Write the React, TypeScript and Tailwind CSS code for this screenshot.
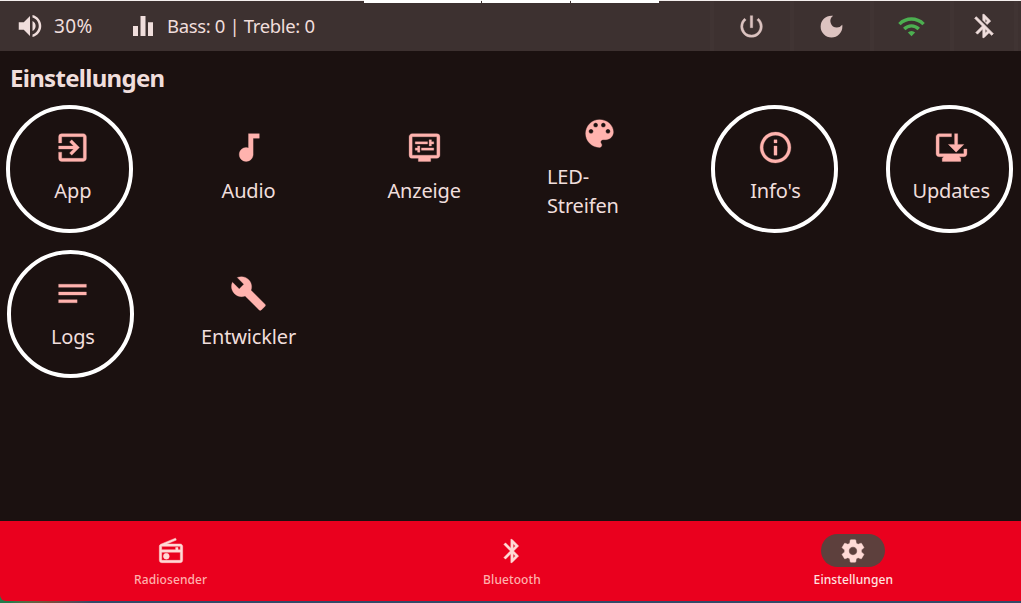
import type { IconType } from "react-icons";
import {
  MdAudiotrack,
  MdBluetooth,
  MdBluetoothDisabled,
  MdBrowserUpdated,
  MdBuild,
  MdDarkMode,
  MdDisplaySettings,
  MdEqualizer,
  MdExitToApp,
  MdInfoOutline,
  MdNotes,
  MdOutlineRadio,
  MdPowerSettingsNew,
  MdSettings,
  MdVolumeUp,
  MdWifi,
} from "react-icons/md";

type Tile = { label: string; icon: IconType; ring?: string };

// Palette glyph drawn on an 18-unit body inside the 24-unit grid.
const PaletteIcon: IconType = ({ size, className }) => (
  <svg width={size} height={size} viewBox="0 0 24 24" fill="currentColor" className={className}>
    <path d="M12 3c-4.97 0-9 4.03-9 9s4.03 9 9 9c.83 0 1.5-.67 1.5-1.5 0-.39-.15-.74-.39-1.01-.23-.26-.38-.61-.38-.99 0-.83.67-1.5 1.5-1.5H16c2.76 0 5-2.24 5-5 0-4.42-4.03-8-9-8zm-5.5 9c-.83 0-1.5-.67-1.5-1.5S5.67 9 6.5 9 8 9.67 8 10.5 7.33 12 6.5 12zm3-4C8.67 8 8 7.33 8 6.5S8.67 5 9.5 5s1.5.67 1.5 1.5S10.33 8 9.5 8zm5 0c-.83 0-1.5-.67-1.5-1.5S13.67 5 14.5 5s1.5.67 1.5 1.5S15.33 8 14.5 8zm3 4c-.83 0-1.5-.67-1.5-1.5S16.67 9 17.5 9s1.5.67 1.5 1.5-.67 1.5-1.5 1.5z" />
  </svg>
);

const tiles: Tile[] = [
  { label: "App", icon: MdExitToApp, ring: "-left-[4px] top-px" },
  { label: "Audio", icon: MdAudiotrack },
  { label: "Anzeige", icon: MdDisplaySettings },
  { label: "LED-Streifen", icon: PaletteIcon },
  { label: "Info's", icon: MdInfoOutline, ring: "-left-[2px] top-px" },
  { label: "Updates", icon: MdBrowserUpdated, ring: "-left-[2px] top-px" },
  { label: "Logs", icon: MdNotes, ring: "-left-[3px] top-0" },
  { label: "Entwickler", icon: MdBuild },
];

const tabs: { label: string; icon: IconType; active?: boolean }[] = [
  { label: "Radiosender", icon: MdOutlineRadio },
  { label: "Bluetooth", icon: MdBluetooth },
  { label: "Einstellungen", icon: MdSettings, active: true },
];

function StatusBar() {
  return (
    <header className="relative flex h-[51px] shrink-0 items-center border-t border-[#f4efee] bg-[#3d3130] text-[#f0dedc]">
      <div className="absolute -top-px left-[364px] flex h-[4px] w-[295px] gap-px">
        <div className="h-[3px] w-[117px] bg-white" />
        <div className="h-[3px] w-[88px] bg-white" />
        <div className="h-[3px] w-[88px] bg-white" />
      </div>
      <div className="flex w-[113px] items-center pl-[15px]">
        <MdVolumeUp size={30} />
        <span className="ml-[9px] text-[19px] leading-none tracking-[0.4px]">30%</span>
      </div>
      <div className="flex flex-1 items-center pl-[15px]">
        <MdEqualizer size={30} />
        <span className="ml-[9px] text-[18.5px] leading-none tracking-[-0.35px]">
          Bass: 0 | Treble: 0
        </span>
      </div>
      <div className="flex h-full w-[311px]">
        <div className="flex w-[80px] items-center justify-center border-l-4 border-[#403433] text-[#dcc3c0]">
          <MdPowerSettingsNew
            size={29}
            className="mr-px stroke-current stroke-[0.3] [&>path[fill=none]]:stroke-none"
          />
        </div>
        <div className="flex w-[80px] items-center justify-center border-l-4 border-[#403433] text-[#dcc3c0]">
          <MdDarkMode size={29} className="mr-px" />
        </div>
        <div className="flex w-[80px] items-center justify-center border-l-4 border-[#403433] text-[#4caf50]">
          <MdWifi size={29} className="mr-px" />
        </div>
        <div className="flex w-[68px] items-center justify-center border-x-4 border-[#403433]">
          <MdBluetoothDisabled
            size={28}
            className="mr-px stroke-current stroke-[0.6] [&>path[fill=none]]:stroke-none"
          />
        </div>
      </div>
    </header>
  );
}

function SettingsTile({ label, icon: Icon, ring }: Tile) {
  return (
    <div className="relative flex h-[126px] flex-col items-center justify-center gap-[10px] px-[10px]">
      {ring && (
        <div className={`absolute h-[128px] w-[127px] rounded-full border-4 border-white ${ring}`} />
      )}
      <Icon
        size={37}
        className="shrink-0 stroke-current stroke-[0.2] text-[#ffb3ae] [&>path[fill=none]]:stroke-none"
      />
      <span className="text-[20px] leading-[29px] tracking-[-0.15px]">{label}</span>
    </div>
  );
}

export default function App() {
  return (
    <div className="flex h-[603px] w-[1021px] flex-col overflow-hidden bg-[#1b1110] font-['Noto_Sans',sans-serif] text-[#f0dedc]">
      <StatusBar />
      <main className="flex-1 pr-[7px] pl-[10px]">
        <h1 className="pt-[11px] text-[24px] leading-[32px] font-bold tracking-[-0.7px]">
          Einstellungen
        </h1>
        <div className="mt-[10px] grid grid-cols-6 gap-x-[50px] gap-y-[20px]">
          {tiles.map((tile) => (
            <SettingsTile key={tile.label} {...tile} />
          ))}
        </div>
      </main>
      <div className="shrink-0 bg-linear-to-r from-[#247a4a] from-[1%] via-[#7a4a3a] via-[5%] to-[#344a68] to-[9%] pb-[2px]">
        <nav className="grid h-[80px] w-[1024px] grid-cols-3 rounded-bl-[6px] bg-[#ea001e]">
          {tabs.map(({ label, icon: Icon, active }) => (
            <div key={label} className="flex flex-col items-center pt-[13px]">
              <div
                className={`flex h-[33px] w-[64px] items-center justify-center rounded-full text-[#ffdad6] ${active ? "bg-[#5d403d]" : ""}`}
              >
                <Icon
                  size={28}
                  className="stroke-current stroke-[0.4] [&>path[fill=none]]:stroke-none"
                />
              </div>
              <span
                className={`mt-[5px] text-[12px] leading-[16px] font-medium tracking-[0.1px] ${active ? "text-[#ffe3e0]" : "text-[#ffb0ac]"}`}
              >
                {label}
              </span>
            </div>
          ))}
        </nav>
      </div>
    </div>
  );
}
